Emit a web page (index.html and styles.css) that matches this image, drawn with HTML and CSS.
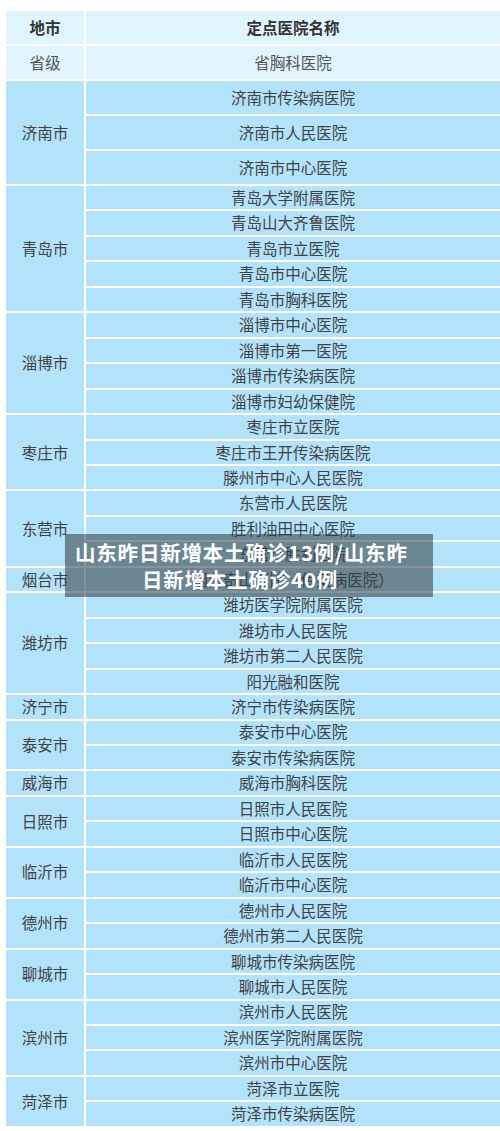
FILE: index.html
```html
<!DOCTYPE html>
<html lang="zh-CN">
<head>
<meta charset="utf-8">
<title>山东定点医院</title>
<link rel="stylesheet" href="styles.css">
</head>
<body>
<div class="page">
  <div class="table">
    <div class="cell head city">地市</div>
    <div class="cell head">定点医院名称</div>

    <div class="cell light city tall">省级</div>
    <div class="cell light tall">省胸科医院</div>

    <div class="cell city">济南市</div>
    <div class="list big">
      <div class="cell">济南市传染病医院</div>
      <div class="cell">济南市人民医院</div>
      <div class="cell">济南市中心医院</div>
    </div>

    <div class="cell city">青岛市</div>
    <div class="list">
      <div class="cell">青岛大学附属医院</div>
      <div class="cell">青岛山大齐鲁医院</div>
      <div class="cell">青岛市立医院</div>
      <div class="cell">青岛市中心医院</div>
      <div class="cell">青岛市胸科医院</div>
    </div>

    <div class="cell city">淄博市</div>
    <div class="list">
      <div class="cell">淄博市中心医院</div>
      <div class="cell">淄博市第一医院</div>
      <div class="cell">淄博市传染病医院</div>
      <div class="cell">淄博市妇幼保健院</div>
    </div>

    <div class="cell city">枣庄市</div>
    <div class="list">
      <div class="cell">枣庄市立医院</div>
      <div class="cell">枣庄市王开传染病医院</div>
      <div class="cell">滕州市中心人民医院</div>
    </div>

    <div class="cell city">东营市</div>
    <div class="list">
      <div class="cell">东营市人民医院</div>
      <div class="cell">胜利油田中心医院</div>
      <div class="cell">东营市胜利医院</div>
    </div>

    <div class="cell city">烟台市</div>
    <div class="list">
      <div class="cell">烟台奇山医院（传染病医院）</div>
    </div>

    <div class="cell city">潍坊市</div>
    <div class="list">
      <div class="cell">潍坊医学院附属医院</div>
      <div class="cell">潍坊市人民医院</div>
      <div class="cell">潍坊市第二人民医院</div>
      <div class="cell">阳光融和医院</div>
    </div>

    <div class="cell city">济宁市</div>
    <div class="list">
      <div class="cell">济宁市传染病医院</div>
    </div>

    <div class="cell city">泰安市</div>
    <div class="list">
      <div class="cell">泰安市中心医院</div>
      <div class="cell">泰安市传染病医院</div>
    </div>

    <div class="cell city">威海市</div>
    <div class="list">
      <div class="cell">威海市胸科医院</div>
    </div>

    <div class="cell city">日照市</div>
    <div class="list">
      <div class="cell">日照市人民医院</div>
      <div class="cell">日照市中心医院</div>
    </div>

    <div class="cell city">临沂市</div>
    <div class="list">
      <div class="cell">临沂市人民医院</div>
      <div class="cell">临沂市中心医院</div>
    </div>

    <div class="cell city">德州市</div>
    <div class="list">
      <div class="cell">德州市人民医院</div>
      <div class="cell">德州市第二人民医院</div>
    </div>

    <div class="cell city">聊城市</div>
    <div class="list">
      <div class="cell">聊城市传染病医院</div>
      <div class="cell">聊城市人民医院</div>
    </div>

    <div class="cell city">滨州市</div>
    <div class="list">
      <div class="cell">滨州市人民医院</div>
      <div class="cell">滨州医学院附属医院</div>
      <div class="cell">滨州市中心医院</div>
    </div>

    <div class="cell city">菏泽市</div>
    <div class="list">
      <div class="cell">菏泽市立医院</div>
      <div class="cell">菏泽市传染病医院</div>
    </div>
  </div>

  <div class="caption">山东昨日新增本土确诊13例/山东昨<br>日新增本土确诊40例</div>
</div>
</body>
</html>
```

FILE: styles.css
```css
html, body {
  margin: 0;
  padding: 0;
  background: #ffffff;
}

.page {
  position: relative;
  width: 500px;
  height: 1131px;
  padding: 11px 0 0 6px;
  box-sizing: border-box;
  font-family: "Noto Sans CJK SC", "Noto Sans", sans-serif;
  overflow: hidden;
}

.table {
  display: grid;
  grid-template-columns: 78px 414px;
  gap: 2px;
}

.list {
  display: flex;
  flex-direction: column;
  gap: 2px;
}

.cell {
  display: flex;
  align-items: center;
  justify-content: center;
  background: #b3e3fa;
  color: #424242;
  font-size: 15.5px;
  line-height: 1;
  height: 23.46px;
  white-space: nowrap;
}

.cell.city {
  height: auto;
}

.list.big .cell {
  height: 33px;
}

.cell.head {
  background: #e0f4fd;
  font-weight: bold;
  color: #333333;
  height: 32.5px;
}

.cell.light {
  background: #e0f4fd;
  color: #555555;
}

.cell.tall {
  height: 33.5px;
}

.caption {
  position: absolute;
  left: 65px;
  top: 534px;
  width: 368px;
  height: 63px;
  box-sizing: border-box;
  padding: 5px 28px 0 10px;
  background: rgba(50, 60, 66, 0.56);
  color: #ffffff;
  font-family: "Noto Sans CJK SC", "Noto Sans", sans-serif;
  font-weight: bold;
  font-size: 20.5px;
  letter-spacing: 0.8px;
  line-height: 26.5px;
  text-align: center;
  white-space: nowrap;
}
```
